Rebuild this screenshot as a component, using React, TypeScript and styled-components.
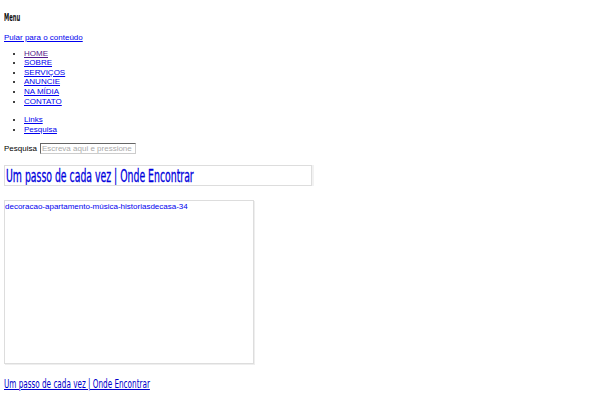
import styled, { createGlobalStyle } from 'styled-components';

const GlobalStyle = createGlobalStyle`
  body {
    margin: 4px;
    font-family: "Liberation Sans", Arial, sans-serif;
    font-size: 8px;
    line-height: 9.6px;
    color: #000;
    background: #fff;
  }
  a { color: #0000ee; }
`;

// the original heading face is a narrow display font; DejaVu condensed, squeezed further
const Narrow = styled.span<{ $scale: number }>`
  display: inline-block;
  font-family: "DejaVu Sans", sans-serif;
  font-stretch: condensed;
  transform: scaleX(${(p) => p.$scale});
  transform-origin: left center;
  white-space: nowrap;
`;

const MenuTitle = styled.h3`
  font-weight: bold;
  font-size: 10px;
  line-height: 12px;
  margin: 8px 0 9px;
  color: #111;
`;

const SkipLink = styled.a`
  display: block;
  margin-bottom: 6px;
`;

const NavList = styled.ul<{ $gap: number }>`
  margin: 0 0 ${(p) => p.$gap}px;
  padding-left: 20px;
`;

const NavLink = styled.a<{ $visited?: boolean }>`
  color: ${(p) => (p.$visited ? '#551a8b' : '#0000ee')};
`;

const SearchRow = styled.form`
  display: flex;
  align-items: center;
  gap: 3px;
  margin: 0 0 11px;
`;

const SearchLabel = styled.label`
  font-weight: normal;
`;

const SearchInput = styled.input`
  width: 96px;
  height: 11px;
  box-sizing: border-box;
  padding: 0 1px;
  font-family: "Liberation Sans", Arial, sans-serif;
  font-size: 8px;
  border: 1px solid #ccc;
  border-top-color: #666;
  border-left-color: #666;
  &::placeholder { color: #aaa; }
`;

const PostTitleBox = styled.h2`
  margin: 0 0 14px;
  width: 308px;
  height: 21px;
  box-sizing: border-box;
  border: 1px solid #ddd;
  box-shadow: 2px 0 0 #f2f2f2;
  font-weight: normal;
  font-size: 17px;
  line-height: 20px;
  padding-left: 1px;
  color: #0000dd;
  -webkit-text-stroke: 0.3px #0000dd;
  overflow: hidden;
`;

const ImageFrame = styled.div`
  width: 250px;
  height: 164px;
  box-sizing: border-box;
  border: 1px solid #ddd;
  box-shadow: 1px 1px 0 #eee;
  padding-top: 1px;
  color: #0000ee;
  margin-bottom: 12px;
`;

const BottomTitle = styled.a`
  display: block;
  font-size: 13px;
  line-height: 16px;
  color: #0000cc;
`;

const navItems = ['HOME', 'SOBRE', 'SERVIÇOS', 'ANUNCIE', 'NA MÍDIA', 'CONTATO'];
const title = 'Um passo de cada vez | Onde Encontrar';

export default function App() {
  return (
    <>
      <GlobalStyle />
      <MenuTitle><Narrow $scale={0.58}>Menu</Narrow></MenuTitle>
      <SkipLink href="#content">Pular para o conteúdo</SkipLink>
      <NavList $gap={9}>
        {navItems.map((item, i) => (
          <li key={item}>
            <NavLink href="#" $visited={i === 0}>{item}</NavLink>
          </li>
        ))}
      </NavList>
      <NavList $gap={9}>
        <li><NavLink href="#">Links</NavLink></li>
        <li><NavLink href="#">Pesquisa</NavLink></li>
      </NavList>
      <SearchRow>
        <SearchLabel>Pesquisa</SearchLabel>
        <SearchInput placeholder="Escreva aqui e pressione Enter" />
      </SearchRow>
      <PostTitleBox><Narrow $scale={0.61}>{title}</Narrow></PostTitleBox>
      <ImageFrame>decoracao-apartamento-música-historiasdecasa-34</ImageFrame>
      <BottomTitle href="#"><Narrow $scale={0.62} style={{ textDecoration: 'underline' }}>{title}</Narrow></BottomTitle>
    </>
  );
}
